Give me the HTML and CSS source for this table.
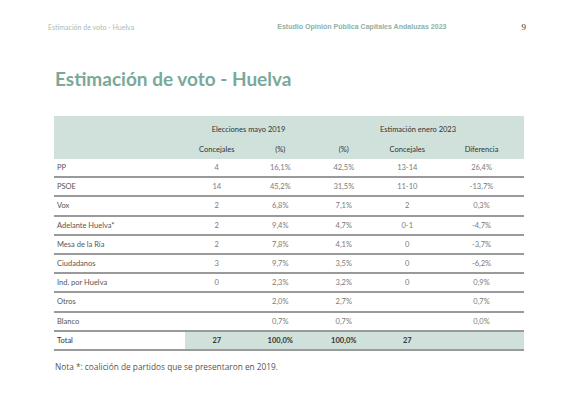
FILE: index.html
```html
<!DOCTYPE html>
<html lang="es">
<head>
<meta charset="utf-8">
<link rel="stylesheet" href="styles.css">
</head>
<body>
<div class="page">
  <header class="top">
    <span class="top-left">Estimación de voto - Huelva</span>
    <span class="top-right"><span class="study">Estudio Opinión Pública Capitales Andaluzas 2023</span><span class="num">9</span></span>
  </header>
  <h1 class="title">Estimación de voto - Huelva</h1>
  <table class="votes">
    <colgroup>
      <col class="c-name"><col class="c-n"><col class="c-n"><col class="c-n"><col class="c-n"><col class="c-diff">
    </colgroup>
    <thead>
      <tr class="h1row">
        <th></th>
        <th colspan="2">Elecciones mayo 2019</th>
        <th colspan="3">Estimación enero 2023</th>
      </tr>
      <tr class="h2row">
        <th></th>
        <th>Concejales</th>
        <th>(%)</th>
        <th>(%)</th>
        <th>Concejales</th>
        <th>Diferencia</th>
      </tr>
    </thead>
    <tbody>
      <tr><td>PP</td><td>4</td><td>16,1%</td><td>42,5%</td><td>13-14</td><td>26,4%</td></tr>
      <tr><td>PSOE</td><td>14</td><td>45,2%</td><td>31,5%</td><td>11-10</td><td>-13,7%</td></tr>
      <tr><td>Vox</td><td>2</td><td>6,8%</td><td>7,1%</td><td>2</td><td>0,3%</td></tr>
      <tr><td>Adelante Huelva*</td><td>2</td><td>9,4%</td><td>4,7%</td><td>0-1</td><td>-4,7%</td></tr>
      <tr><td>Mesa de la Ría</td><td>2</td><td>7,8%</td><td>4,1%</td><td>0</td><td>-3,7%</td></tr>
      <tr><td>Ciudadanos</td><td>3</td><td>9,7%</td><td>3,5%</td><td>0</td><td>-6,2%</td></tr>
      <tr><td>Ind. por Huelva</td><td>0</td><td>2,3%</td><td>3,2%</td><td>0</td><td>0,9%</td></tr>
      <tr><td>Otros</td><td></td><td>2,0%</td><td>2,7%</td><td></td><td>0,7%</td></tr>
      <tr><td>Blanco</td><td></td><td>0,7%</td><td>0,7%</td><td></td><td>0,0%</td></tr>
      <tr class="total"><td>Total</td><td>27</td><td>100,0%</td><td>100,0%</td><td>27</td><td></td></tr>
    </tbody>
  </table>
  <p class="note">Nota *: coalición de partidos que se presentaron en 2019.</p>
</div>
</body>
</html>
```

FILE: styles.css
```css
html, body {
  margin: 0;
  padding: 0;
  background: #ffffff;
}

.page {
  width: 580px;
  height: 413px;
  box-sizing: border-box;
  padding-top: 21px;
  font-family: "Lato", "Open Sans", sans-serif;
}

.top {
  display: flex;
  justify-content: space-between;
  align-items: center;
  margin: 0 54px 0 48px;
  height: 11px;
}

.top-left {
  font-family: "Lato", sans-serif;
  font-size: 7px;
  color: #a7bdb5;
}

.top-right {
  display: flex;
  align-items: center;
  gap: 75px;
}

.study {
  font-family: "Liberation Sans", sans-serif;
  font-weight: 700;
  font-size: 7.05px;
  color: #8fb0a4;
}

.num {
  font-family: "Liberation Serif", serif;
  font-size: 9px;
  color: #333333;
}

.title {
  margin: 35px 0 0 55px;
  font-family: "Lato", sans-serif;
  font-weight: 700;
  font-size: 19px;
  line-height: 23px;
  color: #79a999;
}

.votes {
  margin: 26px 0 0 54px;
  width: 470px;
  border-collapse: collapse;
  table-layout: fixed;
  font-family: "Lato", sans-serif;
  font-size: 7.5px;
}

.c-name { width: 131px; }
.c-n { width: 63.5px; }
.c-diff { width: 85px; }

.votes thead tr {
  background: #cfe1da;
}

.votes th {
  font-weight: 400;
  color: #333333;
  text-align: center;
  padding: 0;
}

.h1row th { height: 20px; padding-top: 3px; }
.h2row th { height: 19px; padding-top: 1px; }

.votes td {
  height: 17.2px;
  padding: 0;
  text-align: center;
  color: #7a7a7a;
  border-bottom: 2px solid #9a9a9a;
}

.votes td:first-child {
  text-align: left;
  padding-left: 3px;
  color: #555555;
}

.votes tr.total td {
  background: #cfe1da;
  color: #333333;
  font-weight: 700;
}

.votes tr.total td:first-child {
  background: #ffffff;
  font-weight: 400;
}

.note {
  margin: 10px 0 0 55px;
  font-family: "Open Sans", sans-serif;
  font-size: 8.3px;
  color: #555555;
}
```
